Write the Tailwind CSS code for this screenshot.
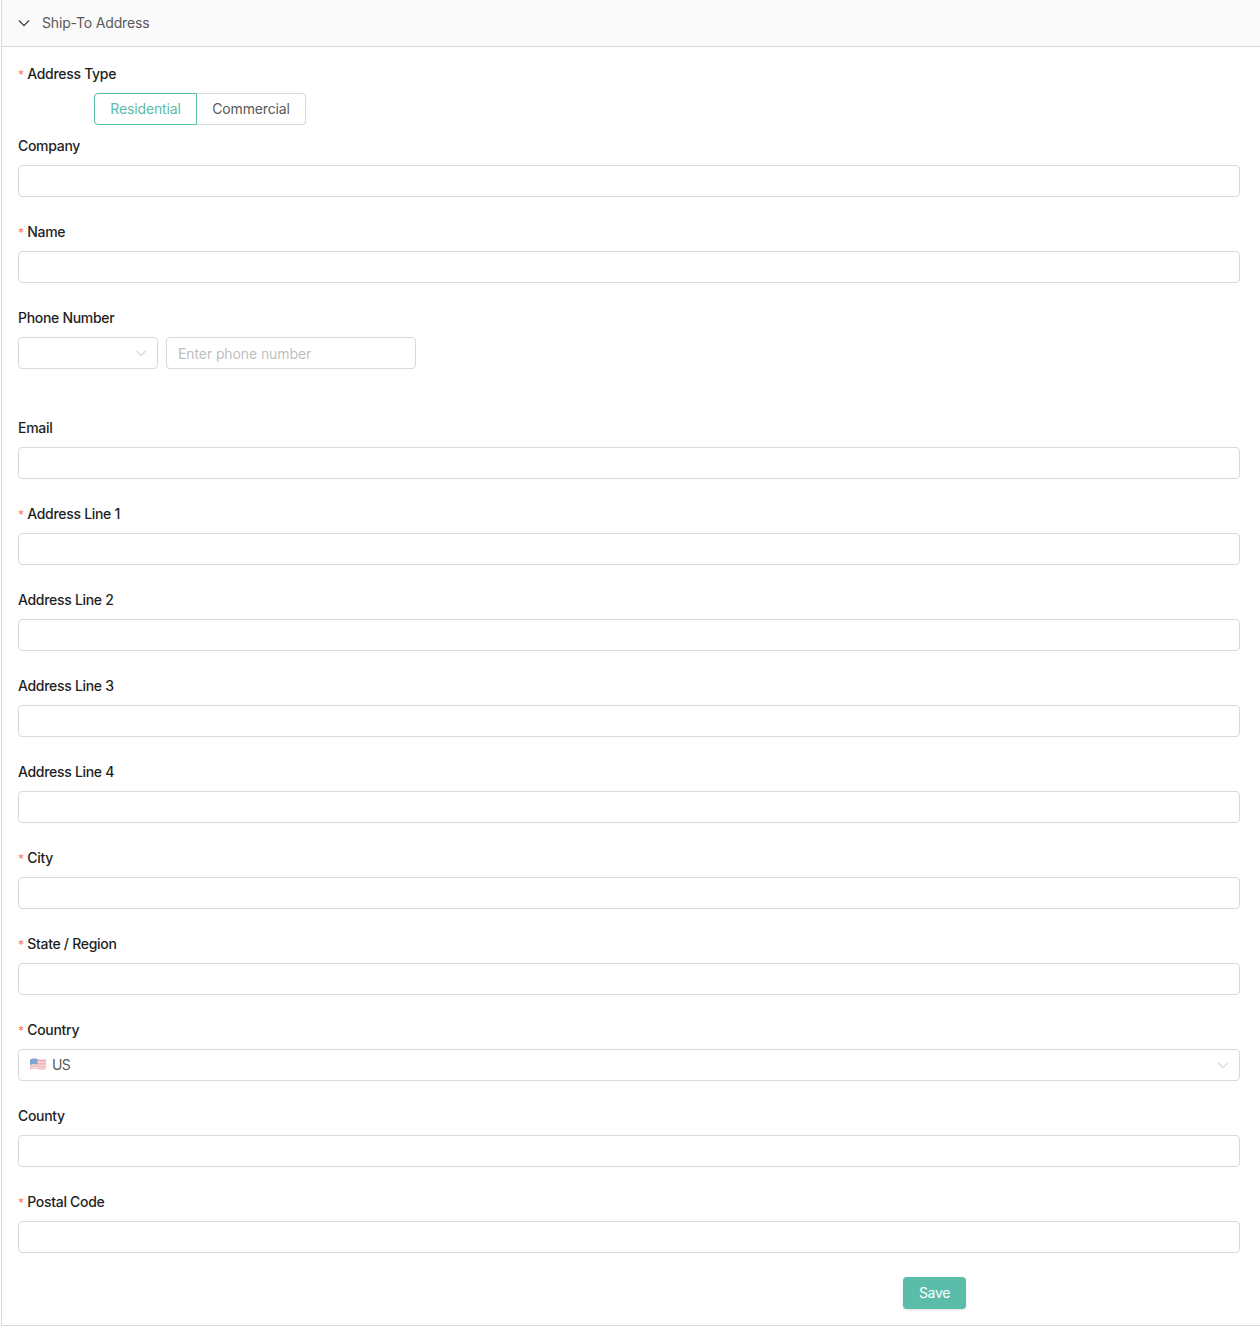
<!DOCTYPE html>
<html lang="en">
<head>
    <meta charset="UTF-8">
    <title>Ship-To Address</title>
    <script src="https://cdn.jsdelivr.net/npm/@tailwindcss/browser@4"></script>
</head>
<body class="bg-white font-['Inter',sans-serif] text-[14px] leading-[22px] tracking-[-0.15px] text-[#1f1f1f]">

<div class="ml-px border-l border-b border-[#d9d9d9] h-[1326px]">
    <!-- header -->
    <div class="h-[47px] bg-[#fafafa] border-b border-[#d9d9d9] flex items-center pl-4 text-[#595959]">
        <svg class="w-3 h-3 mr-3 text-[#333]" viewBox="0 0 12 12" fill="none" stroke="currentColor" stroke-width="1.1"><path d="M1 3.5 6 8.7 11 3.5"/></svg>
        <span>Ship-To Address</span>
    </div>

    <form class="pt-4 pl-4 pr-5">
        <!-- address type -->
        <div class="mb-2.5">
            <label class="block mb-2 font-medium tracking-[-0.3px]"><span class="text-[#ff4d4f]/80 text-[12px] leading-none font-normal mr-[3.5px]">*</span>Address Type</label>
            <div class="flex ml-[76px] h-8">
                <div class="w-[103px] border border-[#5abda9] rounded-l-[4px] text-[#5abda9] flex items-center justify-center">Residential</div>
                <div class="w-[109px] border border-l-0 border-[#d9d9d9] rounded-r-[4px] text-[#595959] flex items-center justify-center">Commercial</div>
            </div>
        </div>

        <div class="mb-6">
            <label class="block mb-2 font-medium tracking-[-0.3px]">Company</label>
            <input class="block w-full h-8 border border-[#d9d9d9] rounded-[4px]">
        </div>
        <div class="mb-6">
            <label class="block mb-2 font-medium tracking-[-0.3px]"><span class="text-[#ff4d4f]/80 text-[12px] leading-none font-normal mr-[3.5px]">*</span>Name</label>
            <input class="block w-full h-8 border border-[#d9d9d9] rounded-[4px]">
        </div>

        <!-- phone -->
        <div class="mb-12">
            <label class="block mb-2 font-medium tracking-[-0.3px]">Phone Number</label>
            <div class="flex gap-2">
                <div class="w-[140px] h-8 border border-[#d9d9d9] rounded-[4px] flex items-center justify-end pr-[10px]">
                    <svg class="w-3 h-3 text-[#bfbfbf]" viewBox="0 0 12 12" fill="none" stroke="currentColor" stroke-width="1"><path d="M1 3.5 6 8.7 11 3.5"/></svg>
                </div>
                <input class="w-[250px] h-8 border border-[#d9d9d9] rounded-[4px] px-[11px] tracking-[-0.1px] placeholder:text-[#bfbfbf]" placeholder="Enter phone number">
            </div>
        </div>

        <div class="mb-6">
            <label class="block mb-2 font-medium tracking-[-0.3px]">Email</label>
            <input class="block w-full h-8 border border-[#d9d9d9] rounded-[4px]">
        </div>
        <div class="mb-6">
            <label class="block mb-2 font-medium tracking-[-0.3px]"><span class="text-[#ff4d4f]/80 text-[12px] leading-none font-normal mr-[3.5px]">*</span>Address Line 1</label>
            <input class="block w-full h-8 border border-[#d9d9d9] rounded-[4px]">
        </div>
        <div class="mb-6">
            <label class="block mb-2 font-medium tracking-[-0.3px]">Address Line 2</label>
            <input class="block w-full h-8 border border-[#d9d9d9] rounded-[4px]">
        </div>
        <div class="mb-6">
            <label class="block mb-2 font-medium tracking-[-0.3px]">Address Line 3</label>
            <input class="block w-full h-8 border border-[#d9d9d9] rounded-[4px]">
        </div>
        <div class="mb-6">
            <label class="block mb-2 font-medium tracking-[-0.3px]">Address Line 4</label>
            <input class="block w-full h-8 border border-[#d9d9d9] rounded-[4px]">
        </div>
        <div class="mb-6">
            <label class="block mb-2 font-medium tracking-[-0.3px]"><span class="text-[#ff4d4f]/80 text-[12px] leading-none font-normal mr-[3.5px]">*</span>City</label>
            <input class="block w-full h-8 border border-[#d9d9d9] rounded-[4px]">
        </div>
        <div class="mb-6">
            <label class="block mb-2 font-medium tracking-[-0.3px]"><span class="text-[#ff4d4f]/80 text-[12px] leading-none font-normal mr-[3.5px]">*</span>State / Region</label>
            <input class="block w-full h-8 border border-[#d9d9d9] rounded-[4px]">
        </div>

        <!-- country -->
        <div class="mb-6">
            <label class="block mb-2 font-medium tracking-[-0.3px]"><span class="text-[#ff4d4f]/80 text-[12px] leading-none font-normal mr-[3.5px]">*</span>Country</label>
            <div class="w-full h-8 border border-[#d9d9d9] rounded-[4px] flex items-center pl-[11px] pr-[10px] text-[#595959]">
                <svg class="w-4 h-3 mr-1.5 -mt-0.5" viewBox="0 0 16 12">
                    <path d="M0 1.5Q4 0 8 1t8 0v10q-4 1-8 0t-8 .5z" fill="#f0b4b8"/>
                    <path d="M0 4.2Q4 3 8 4t8 0M0 7Q4 6 8 7t8 0M0 9.6Q4 8.6 8 9.6t8 0" fill="none" stroke="#f8e6e6" stroke-width="1"/>
                    <path d="M0 1.5Q4 0 7.5 .9V6.4Q4 5.6 0 6.8z" fill="#7fa6d6"/>
                </svg>
                <span class="tracking-[-0.6px]">US</span>
                <svg class="w-3 h-3 ml-auto text-[#bfbfbf]" viewBox="0 0 12 12" fill="none" stroke="currentColor" stroke-width="1"><path d="M1 3.5 6 8.7 11 3.5"/></svg>
            </div>
        </div>

        <div class="mb-6">
            <label class="block mb-2 font-medium tracking-[-0.3px]">County</label>
            <input class="block w-full h-8 border border-[#d9d9d9] rounded-[4px]">
        </div>
        <div class="mb-6">
            <label class="block mb-2 font-medium tracking-[-0.3px]"><span class="text-[#ff4d4f]/80 text-[12px] leading-none font-normal mr-[3.5px]">*</span>Postal Code</label>
            <input class="block w-full h-8 border border-[#d9d9d9] rounded-[4px]">
        </div>

        <div class="pl-[885px]">
            <button type="button" class="w-[63px] h-8 bg-[#5abda9] text-white rounded-[4px] shadow-sm tracking-[-0.3px]">Save</button>
        </div>
    </form>
</div>
</body>
</html>
